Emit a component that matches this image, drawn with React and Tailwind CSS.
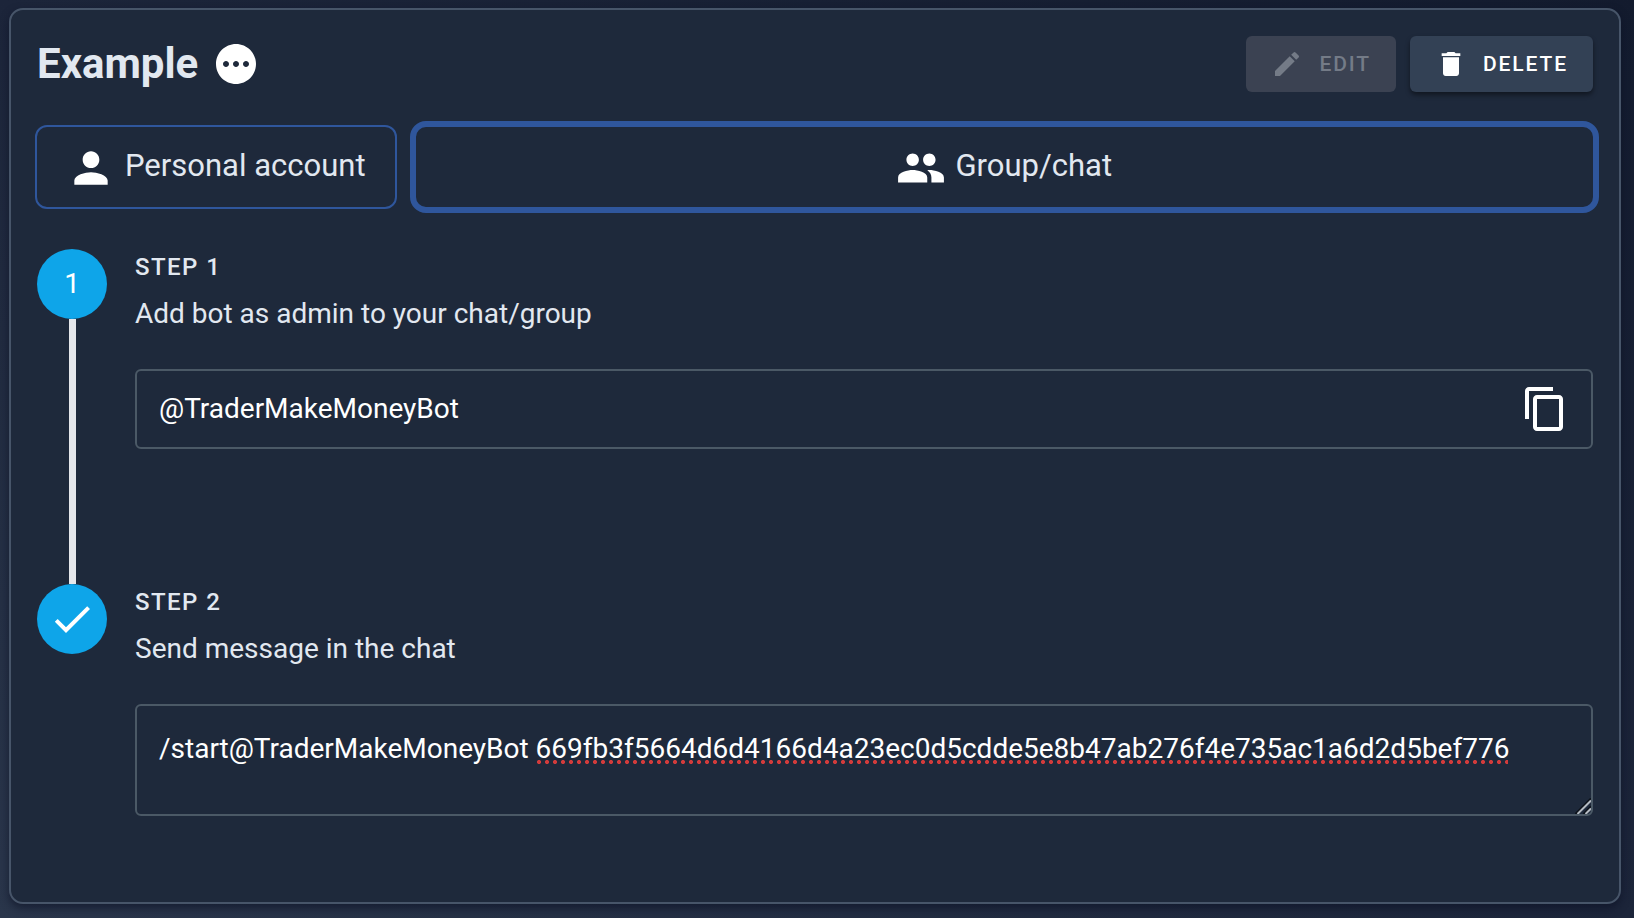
import { MdPending, MdEdit, MdDelete, MdPerson, MdGroup, MdCheck, MdContentCopy } from "react-icons/md";

const BOT = "@TraderMakeMoneyBot";
const COMMAND = "/start@TraderMakeMoneyBot 669fb3f5664d6d4166d4a23ec0d5cdde5e8b47ab276f4e735ac1a6d2d5bef776";

function Step({ marker, title, text, last, children }) {
  return (
    <li className="flex gap-7">
      <div className="flex w-[70px] shrink-0 flex-col items-center">
        <div className="flex size-[70px] items-center justify-center rounded-full bg-[#0ea5e9] text-[28px] text-white">
          {marker}
        </div>
        {!last && <div className="w-[7px] flex-1 bg-[#e5e7eb]" />}
      </div>
      <div className={last ? "min-w-0 flex-1" : "min-w-0 flex-1 pb-[135px]"}>
        <h2 className="text-[24px] leading-9 font-medium tracking-[0.06em] uppercase">{title}</h2>
        <p className="mt-2 text-[28px] leading-[42px]">{text}</p>
        <div className="mt-[34px]">{children}</div>
      </div>
    </li>
  );
}

export default function App() {
  return (
    <div className="flex min-h-screen flex-col bg-linear-to-tr from-[#2a364b] via-[#1c253a] to-[#131b2e] pt-2 pr-[13px] pb-[14px] pl-[9px] font-[Roboto,sans-serif] text-[#e2e8f0]">
      <main className="flex-1 rounded-[14px] border-2 border-[#475569] bg-[#1e293b] p-[26px] shadow-[0_4px_8px_rgba(10,15,35,0.6)]">
        <header className="flex items-center justify-between">
          <div className="flex items-center gap-[14px]">
            <h1 className="text-[42px] leading-[56px] font-bold">Example</h1>
            <MdPending className="size-12 text-white" aria-label="Pending" />
          </div>
          <div className="flex gap-[14px]">
            <button type="button" disabled className="flex h-14 items-center gap-4 rounded-md bg-[#3b4252] px-[25px] text-[21px] leading-8 font-medium tracking-[0.09em] text-[#747b87] uppercase">
              <MdEdit className="size-8" />
              Edit
            </button>
            <button type="button" className="flex h-14 items-center gap-4 rounded-md bg-[#334155] px-[25px] text-[21px] leading-8 font-medium tracking-[0.09em] text-white uppercase shadow-[0_3px_5px_rgba(0,0,0,0.45)]">
              <MdDelete className="size-8" />
              Delete
            </button>
          </div>
        </header>

        <div className="mt-[35px] flex gap-[21px] text-[31px] leading-10">
          <button type="button" className="flex h-20 items-center gap-[9px] rounded-[10px] px-[29px] pb-0.5 outline-2 outline-[#2f569c]">
            <MdPerson className="mt-1 size-[50px] text-white" />
            Personal account
          </button>
          <button type="button" className="flex h-20 flex-1 items-center justify-center gap-[9px] rounded-[10px] pb-0.5 outline-6 outline-[#2f569c]">
            <MdGroup className="mt-1 size-[50px] text-white" />
            Group/chat
          </button>
        </div>

        <ol className="mt-[42px]">
          <Step marker="1" title="Step 1" text="Add bot as admin to your chat/group">
            <div className="flex h-20 items-center rounded-md border-2 border-[#4b5966] px-[22px]">
              <input aria-label="Bot name" readOnly defaultValue={BOT} className="min-w-0 flex-1 bg-transparent text-[28px] text-white outline-none" />
              <button type="button" aria-label="Copy" className="text-white">
                <MdContentCopy className="size-12" />
              </button>
            </div>
          </Step>
          <Step last marker={<MdCheck className="size-12" />} title="Step 2" text="Send message in the chat">
            <div className="relative">
              <textarea
                aria-label="Message"
                readOnly
                spellCheck={false}
                defaultValue={COMMAND}
                className="block h-28 w-full resize-none overflow-hidden rounded-md border-2 border-[#4b5966] bg-transparent px-[22px] pt-6 text-[28px] leading-[38px] text-white outline-none"
              />
              <div className="pointer-events-none absolute top-14 left-[400px] h-1 w-[973px] bg-[radial-gradient(circle,#d23b3b_0_1.8px,transparent_2.3px)] bg-[length:8px_4px]" />
              <svg className="pointer-events-none absolute right-0.5 bottom-0.5 size-4" viewBox="0 0 16 16" fill="none">
                <path d="M0.500 16 16 0.500M8.500 16l7.500-7.500" stroke="#0b1018" strokeWidth="2" />
                <path d="M2.500 16 16 2.500M10.500 16l5.500-5.500" stroke="#b4bac2" strokeWidth="2" />
              </svg>
            </div>
          </Step>
        </ol>
      </main>
    </div>
  );
}
